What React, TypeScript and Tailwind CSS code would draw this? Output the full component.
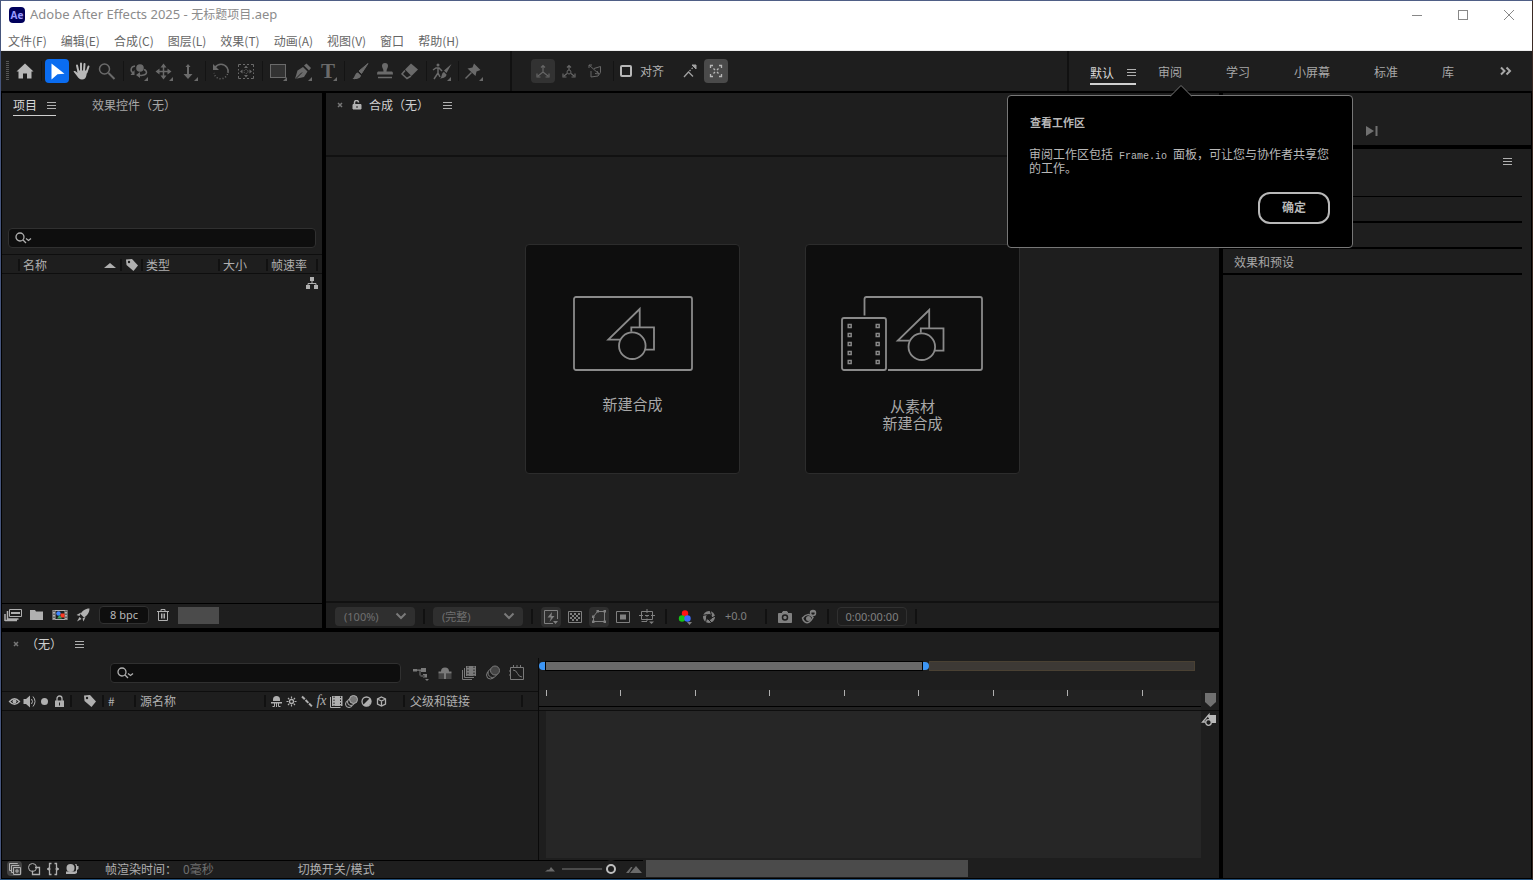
import { useState } from "react";
import type { ReactNode } from "react";

const MENUS = ["文件(F)", "编辑(E)", "合成(C)", "图层(L)", "效果(T)", "动画(A)", "视图(V)", "窗口", "帮助(H)"];
const WORKSPACES = ["学习", "小屏幕", "标准", "库"];

function Icon({ size = 20, className = "", children }: { size?: number; className?: string; children: ReactNode }) {
  return (
    <svg
      width={size}
      height={size}
      viewBox={`0 0 ${size} ${size}`}
      fill="none"
      stroke="currentColor"
      className={`shrink-0 ${className}`}
      aria-hidden="true"
    >
      {children}
    </svg>
  );
}

const corner = <path d="M19 16v4h-4z" fill="currentColor" stroke="none" />;

const TOOLS: { label: string; icon: ReactNode; bright?: boolean; active?: boolean; sep?: boolean }[] = [
  {
    label: "主页",
    bright: true,
    sep: true,
    icon: <path d="M10 2.500 18.500 10.500H16.500V17.500H12V12.500H8V17.500H3.500V10.500H1.500Z" fill="currentColor" stroke="none" />,
  },
  {
    label: "选取工具",
    active: true,
    icon: <path d="M4.500 2.500 17.500 12.800 10.500 13.200 4.500 18.500Z" fill="currentColor" stroke="none" />,
  },
  {
    label: "手形工具",
    bright: true,
    icon: (
      <>
        <path d="M6.500 11 5 4.500M9 10V2.500M12 10 12.500 3M14.500 11.500 16.500 5.500" strokeWidth="2" strokeLinecap="round" />
        <path d="M5.500 9.500H15L14.500 14C14 17 12.500 18.500 10 18.500 7.500 18.500 6.500 17 5 15L1.500 10.500C2.500 9.500 3.500 10 5.500 12Z" fill="currentColor" stroke="none" />
      </>
    ),
  },
  {
    label: "缩放工具",
    sep: true,
    icon: (
      <>
        <circle cx="7.500" cy="8" r="5" strokeWidth="1.500" />
        <path d="m11.500 12 6 6" strokeWidth="2" />
      </>
    ),
  },
  {
    label: "绕光标旋转",
    icon: (
      <>
        <path d="M6 5C1.500 5.500 1 10 4 12M9 14C13 15 17.500 14 17.500 11.500 17.500 10 16.500 9 15 8.500" strokeWidth="1.500" />
        <circle cx="11" cy="7" r="3.800" fill="currentColor" stroke="none" />
        <path d="M5.500 9v5h-4zM11 11v6l-4-3z" fill="currentColor" stroke="none" />
        {corner}
      </>
    ),
  },
  {
    label: "在光标下移动",
    icon: (
      <>
        <path d="M9.500 4v13M3 10.500h13" strokeWidth="1.500" />
        <path d="m9.500 2.500 3 4h-6zM9.500 18.500l3-4h-6zM1.500 10.500l4-3v6zM17.500 10.500l-4-3v6z" fill="currentColor" stroke="none" />
        {corner}
      </>
    ),
  },
  {
    label: "向光标方向推拉镜头",
    sep: true,
    icon: (
      <>
        <path d="M9 5v10" strokeWidth="2" />
        <path d="m9 3 2.500 3h-5zM9 18l4.500-5h-9z" fill="currentColor" stroke="none" />
        {corner}
      </>
    ),
  },
  {
    label: "旋转工具",
    icon: (
      <>
        <path d="M4 6.500C7 2 13 2 16 6.500 17 8 17.500 10 17 12" strokeWidth="1.500" />
        <path d="M16.500 13C15 17 11 18.500 7.500 17.500 5 16.500 3.500 14.500 3 12" strokeWidth="1.500" strokeDasharray="1 2" />
        <path d="M2 3v6h6z" fill="currentColor" stroke="none" />
      </>
    ),
  },
  {
    label: "向后平移工具",
    sep: true,
    icon: (
      <>
        <path d="M2.500 6V3.500H5M15 3.500h2.500V6M17.500 15v2.500H15M5 17.500H2.500V15M7 3.500h2M11 3.500h2M7 17.500h2M11 17.500h2M2.500 8v1.500M2.500 11.500V13M17.500 8v1.500M17.500 11.500V13" />
        <circle cx="10" cy="10.500" r="2" strokeWidth="1" strokeDasharray="1 1" />
        <path d="m10 4.500 2 2.500H8zM10 16.500l2-2.500H8zM4 10.500l2.500-2v4zM16 10.500l-2.500-2v4z" fill="currentColor" stroke="none" />
      </>
    ),
  },
  {
    label: "矩形工具",
    icon: (
      <>
        <rect x="2.500" y="3.500" width="15" height="13" fill="#333333" />
        {corner}
      </>
    ),
  },
  {
    label: "钢笔工具",
    icon: (
      <>
        <path d="M2 18 4.500 9.500 10 6 14.500 10.500 11 16Z" fill="currentColor" stroke="none" />
        <path d="m2.500 18 6.500-6.500" stroke="#1e1e1e" />
        <path d="m11 4.500 2.500-2L18 7l-2 2.500z" fill="currentColor" stroke="none" />
        {corner}
      </>
    ),
  },
  { label: "横排文字工具", sep: true, icon: corner },
  {
    label: "画笔工具",
    icon: (
      <>
        <path d="M18 2.500 9 10l2.500 2.500z" fill="currentColor" strokeLinejoin="round" />
        <path d="M8 11.500 11 14.500C10.500 18 5 18.500 2.500 18 5 16.500 4.500 12 8 11.500Z" fill="currentColor" stroke="none" />
      </>
    ),
  },
  {
    label: "仿制图章工具",
    icon: (
      <>
        <path d="M7 5a3 3 0 1 1 6 0c0 2-1.500 2.500-1.500 5.500H17q1 0 1 3H2q0-3 1-3h5.500C8.500 7.500 7 7 7 5Z" fill="currentColor" stroke="none" />
        <path d="M3 16.500h14" strokeWidth="1.500" />
      </>
    ),
  },
  {
    label: "橡皮擦工具",
    sep: true,
    icon: (
      <>
        <path d="M11 2.500 18 8.500 11.500 15 5 8.500Z" fill="currentColor" stroke="none" />
        <path d="M5 9.500 2 13 7 17.500 11 15" strokeWidth="1.500" />
      </>
    ),
  },
  {
    label: "Roto 笔刷工具",
    sep: true,
    icon: (
      <>
        <circle cx="6" cy="4" r="1.500" fill="currentColor" stroke="none" />
        <path d="M1 9 4 7H7l3 3M6 7v5l-4 6M6 12l2 4" strokeWidth="1.500" />
        <path d="M19.500 3 12 9.500l2.500 2.500zM12 11l2.500 2.500c0 3-4.500 4-6.500 4 2-1 1.500-6 4-6.500Z" fill="currentColor" stroke="none" />
        {corner}
      </>
    ),
  },
  {
    label: "人偶位置控点工具",
    icon: (
      <>
        <path d="M10 2.500 16.500 9 12.500 10.500 11.500 15 3.500 7.500 8.500 6.500Z" fill="currentColor" stroke="none" />
        <path d="m7.500 11.500-6 6" strokeWidth="1.500" />
        {corner}
      </>
    ),
  },
];

function Burger({ className = "" }: { className?: string }) {
  return (
    <button aria-label="面板菜单" className={`text-[#b0b0b0] ${className}`}>
      <Icon size={9}>
        <path d="M0 1.500h9M0 4.500h9M0 7.500h9" />
      </Icon>
    </button>
  );
}

function TabClose() {
  return (
    <button aria-label="关闭" className="text-[#777777]">
      <Icon size={6}>
        <path d="m1 1 4 4M5 1 1 5" strokeWidth="1.500" />
      </Icon>
    </button>
  );
}

function SearchBox({ label, className = "" }: { label: string; className?: string }) {
  return (
    <label className={`relative flex h-5 items-center rounded border border-[#303030] bg-[#0e0e0e] ${className}`}>
      <Icon size={18} className="ml-1.5 text-[#b0b0b0]">
        <circle cx="5" cy="8" r="4" strokeWidth="1.300" />
        <path d="m8 11 3 3M11 9.500l2.500 2 2.500-2" strokeWidth="1.300" />
      </Icon>
      <input type="text" aria-label={label} className="min-w-0 flex-1 bg-transparent px-1 text-xs text-[#cccccc] outline-none" />
    </label>
  );
}

function Tag() {
  return (
    <Icon size={14}>
      <path d="M1 1.500 7 1 13 7.500 8.500 13 1.500 7Z" fill="currentColor" stroke="none" />
      <circle cx="4" cy="4" r="1.200" fill="#1e1e1e" stroke="none" />
    </Icon>
  );
}

function Shapes() {
  return (
    <>
      <path d="M47 43.700H35.300L66.700 13V31.300M58.300 35.700V31.300H81V53.700H72.300" />
      <circle cx="59.300" cy="49.700" r="13.300" />
    </>
  );
}

function TitleBar() {
  return (
    <header className="bg-white">
      <div className="flex h-7 items-center pl-2">
        <span className="flex size-4 items-center justify-center rounded-sm bg-[#00005b] font-['Open_Sans',sans-serif] text-[10px] font-bold text-[#9999ff]">
          Ae
        </span>
        <h1 className="ml-[5px] flex-1 font-['Noto_Sans','Noto_Sans_CJK_SC',sans-serif] text-[13px] text-[#8c8c8c]">
          Adobe After Effects 2025 - <span className="text-xs">无标题项目</span>.aep
        </h1>
        <div className="flex gap-[34px] pr-[17px] text-[#888888]">
          <button aria-label="最小化">
            <Icon size={12}>
              <path d="M1 6.500h10" />
            </Icon>
          </button>
          <button aria-label="最大化">
            <Icon size={12}>
              <rect x="1.500" y="1.500" width="9" height="9" />
            </Icon>
          </button>
          <button aria-label="关闭窗口">
            <Icon size={12}>
              <path d="m1 1 10 10M11 1 1 11" />
            </Icon>
          </button>
        </div>
      </div>
      <nav className="flex h-[22px] items-center gap-[14px] border-b border-[#eeeeee] pt-[2px] pl-[7px] text-xs text-[#666666]">
        {MENUS.map((m) => (
          <button key={m}>{m}</button>
        ))}
      </nav>
    </header>
  );
}

function Toolbar({ showTip, onClose }: { showTip: boolean; onClose: () => void }) {
  return (
    <div className="relative flex h-[42px] items-stretch border-b-2 border-black bg-[#1e1e1e]">
      <div className="flex items-center pl-1">
        <Icon size={20} className="-mr-3 text-[#555555]">
          <path d="M2.500 0v20" strokeWidth="3" strokeDasharray="1 1" />
        </Icon>
        {TOOLS.map((t) => (
          <div key={t.label} className="flex items-center">
            <button
              aria-label={t.label}
              className={`relative mr-px flex size-6 items-center justify-center rounded ${
                t.active ? "bg-[#0a6cf0] text-white" : t.bright ? "text-[#b8b8b8]" : "text-[#6a6a6a]"
              }`}
            >
              <Icon>{t.icon}</Icon>
              {t.label === "横排文字工具" && (
                <span className="absolute inset-0 text-center font-['Liberation_Serif',serif] text-[21px] leading-6 font-bold">T</span>
              )}
            </button>
            {t.sep && <span className="mx-[3px] h-5 w-px bg-[#141414]" />}
          </div>
        ))}
      </div>
      <div className="ml-[23px] flex items-center border-l-2 border-[#111111] pl-[19px] text-[#666666]">
        <button aria-label="本地轴模式" className="flex size-6 items-center justify-center rounded bg-[#323232]">
          <Icon size={16}>
            <path d="M8 3v6L3 13M8 9l5 4M6 4.500 8 2.500l2 2M2 10.500V14h3.500M14 10.500V14h-3.500" strokeWidth="1.200" />
          </Icon>
        </button>
        <button aria-label="世界轴模式" className="ml-[2px] flex size-6 items-center justify-center">
          <Icon size={16}>
            <path d="M8 3v4M6 10.500 3 13M10 10.500l3 2.500M6 4.500 8 2.500l2 2M2 10.500V14h3.500M14 10.500V14h-3.500" strokeWidth="1.200" />
            <circle cx="8" cy="9" r="2" />
          </Icon>
        </button>
        <button aria-label="视图轴模式" className="ml-[2px] flex size-6 items-center justify-center">
          <Icon size={16}>
            <path d="M7 5.500 13.500 3.500v6L11 13 4 14V8M2 2l10 9M2 5V2h3M10 8l2 3-4-.5" />
          </Icon>
        </button>
        <span className="mx-[6px] h-5 w-px bg-[#141414]" />
        <input
          id="snap"
          type="checkbox"
          className="size-3 appearance-none rounded-xs border-2 border-[#b8b8b8] checked:bg-[#b8b8b8]"
        />
        <label htmlFor="snap" className="ml-2 text-xs text-[#b0b0b0]">
          对齐
        </label>
        <button aria-label="对齐边缘" className="ml-[14px] flex size-6 items-center justify-center text-[#a0a0a0]">
          <Icon size={16}>
            <path d="M2 14 6.500 9l4.500 4.500" strokeWidth="1.300" />
            <path d="m7.500 8 4-4" strokeWidth="1.300" strokeDasharray="1.500 1.500" />
            <path d="M10 2h4v4z" fill="currentColor" />
          </Icon>
        </button>
        <button aria-label="对齐特征" className="ml-[2px] flex size-6 items-center justify-center rounded bg-[#4a4a4a] text-[#b8b8b8]">
          <Icon size={16}>
            <path d="M2.500 5V2.500H5M11 2.500h2.500V5M13.500 11v2.500H11M5 13.500H2.500V11M5.500 5.500l1.500 1.500M10.500 5.500 9 7M5.500 10.500 7 9M10.500 10.500 9 9" strokeWidth="1.300" />
          </Icon>
        </button>
      </div>
      <nav className="ml-auto flex items-center border-l-2 border-[#111111] pl-[21px] text-xs text-[#a8a8a8]">
        <div className="mt-[6px] flex items-center gap-[13px] border-b-2 border-[#d0d0d0] pb-px">
          <button className="leading-[18px] text-[#d8d8d8]">默认</button>
          <Burger />
        </div>
        <button className="mt-[2px] ml-[22px]">审阅</button>
        <div className="mt-[2px] ml-11 flex gap-11">
          {WORKSPACES.map((w) => (
            <button key={w}>{w}</button>
          ))}
        </div>
        <button aria-label="更多工作区" className="mr-5 ml-[46px]">
          <Icon size={12}>
            <path d="m1 2.500 3.500 3.500L1 9.500M6.500 2.500 10 6 6.500 9.500" strokeWidth="2" />
          </Icon>
        </button>
      </nav>
      {showTip && (
        <section className="absolute top-11 right-[179px] z-10 w-[346px] rounded border border-[#777777] bg-black pt-5 pr-[22px] pb-[23px] pl-[21px] font-['Liberation_Sans','Noto_Sans_CJK_SC',sans-serif] text-[#b8b8b8]">
          <svg width="22" height="12" viewBox="0 0 22 12" className="absolute -top-[11px] left-[162px]" aria-hidden="true">
            <path d="M0 11.500 11 .5 22 11.500" fill="#000000" stroke="#777777" />
            <path d="M1.500 11.500h19" stroke="#000000" />
          </svg>
          <h2 className="pl-px text-[11px] leading-[14px] font-bold">查看工作区</h2>
          <p className="mt-[18px] text-xs leading-[14px]">
            审阅工作区包括<span className="font-['Liberation_Mono',monospace] text-[10px] leading-none"> Frame.io </span>面板，可让您与协作者共享您的工作。
          </p>
          <div className="mt-4 flex justify-end">
            <button onClick={onClose} className="h-8 w-[72px] rounded-xl border-2 border-[#b8b8b8] text-xs font-bold">
              确定
            </button>
          </div>
        </section>
      )}
    </div>
  );
}

function ProjectPanel() {
  return (
    <section className="flex w-80 shrink-0 flex-col bg-[#1e1e1e]">
      <div className="flex h-[135px] items-start pl-[11px] text-xs leading-[18px]">
        <div className="mt-[3px] flex items-center gap-[10px] border-b border-[#d0d0d0] pb-px">
          <button className="text-[#d8d8d8]">项目</button>
          <Burger />
        </div>
        <button className="mt-[3px] ml-9 text-[#a8a8a8]">效果控件（无）</button>
      </div>
      <SearchBox label="搜索项目" className="mr-[6px] ml-[6px]" />
      <div className="mt-[6px] flex h-5 items-center border-y border-[#0e0e0e] pt-[2px] pl-4 text-xs leading-3 text-[#b0b0b0]">
        <div className="flex w-[102px] items-center justify-between border-l-2 border-[#111111] pr-1 pl-[3px]">
          <span>名称</span>
          <Icon size={12}>
            <path d="M0 9 6 4l6 5z" fill="currentColor" stroke="none" />
          </Icon>
        </div>
        <div className="flex h-3 w-[21px] items-center justify-center border-l-2 border-[#111111]">
          <Tag />
        </div>
        <span className="w-[77px] border-l-2 border-[#111111] pl-[3px]">类型</span>
        <span className="w-12 border-l-2 border-[#111111] pl-[3px]">大小</span>
        <span className="w-[50px] border-l-2 border-[#111111] pl-[3px]">帧速率</span>
        <span className="h-3 border-l-2 border-[#111111]" />
      </div>
      <div className="flex flex-1 items-start justify-end pt-[2px] pr-[3px] text-[#b0b0b0]">
        <Icon size={14}>
          <path d="M5 1h4v4H5zM1 9h4v4H1zM9 9h4v4H9z" fill="currentColor" stroke="none" />
          <path d="M7 5v2.500M3 9V7.500h8V9" />
        </Icon>
      </div>
      <div className="flex h-[25px] items-center border-t border-black pb-[2px] pl-[2px] text-[#b0b0b0]">
        <button aria-label="解释素材">
          <Icon size={18}>
            <path d="M5.500 3.500h12v7h-12z" />
            <path d="M7 6h9v2H7z" fill="currentColor" stroke="none" />
            <path d="M3.500 5v8h11M1 8v7M1 14.500h12" strokeWidth="1.500" />
          </Icon>
        </button>
        <button aria-label="新建文件夹" className="ml-[7px]">
          <Icon size={16}>
            <path d="M1 3h5l1 1.500h7V13H1z" fill="currentColor" stroke="none" />
          </Icon>
        </button>
        <button aria-label="新建合成" className="ml-[7px]">
          <Icon size={16}>
            <path d="M.5 3h15v10H.5z" fill="currentColor" stroke="none" />
            <path d="M3.500 4h9v8h-9z" fill="#1e1e1e" stroke="none" />
            <path d="M2 3.500v10M14 3.500v10" stroke="#1e1e1e" strokeDasharray="1.500 1.500" />
            <circle cx="6.500" cy="6.500" r="2.200" fill="#3f86ff" stroke="none" />
            <path d="M8.500 6.500h4v4h-4z" fill="#ff3b24" stroke="none" />
            <path d="m7.500 8 2.500 3.500H5z" fill="#36a060" stroke="none" />
          </Icon>
        </button>
        <button aria-label="项目设置" className="ml-[7px]">
          <Icon size={16}>
            <path d="M14.500 1.500C10 1.500 7 4 5.500 7L9 10.500C12 8.500 14.500 6 14.500 1.500ZM6 5.500 1.500 8l3 1zM10.500 10 8.500 14.500 7.500 11.500zM4.500 10l2 2L2 14.500z" fill="currentColor" stroke="none" />
          </Icon>
        </button>
        <button className="ml-2 h-[18px] w-[50px] rounded border border-[#303030] bg-[#0e0e0e] font-['Noto_Sans',sans-serif] text-[11px] leading-4 text-[#b8b8b8]">
          8 bpc
        </button>
        <button aria-label="删除" className="ml-[7px]">
          <Icon size={14}>
            <path d="M1 3.500h12M5 3V1.500h4V3M2.500 4v8.500h9V4M5.500 5.500v5M7 5.500v5M8.500 5.500v5" />
          </Icon>
        </button>
        <div className="ml-2 h-[17px] w-[41px] bg-[#4b4b4b]" />
      </div>
    </section>
  );
}

function FooterSep() {
  return <span className="mx-2 h-[15px] w-[2px] bg-[#111111]" />;
}

function FooterSelect({ label, value, className }: { label: string; value: string; className: string }) {
  return (
    <div className={`relative flex ${className}`}>
      <select
        aria-label={label}
        defaultValue={value}
        className="h-[19px] w-full appearance-none rounded bg-[#2f2f2f] pl-[9px] font-['Noto_Sans','Noto_Sans_CJK_SC',sans-serif] text-[11px] leading-[19px] text-[#6f6f6f]"
      >
        <option>{value}</option>
      </select>
      <Icon size={12} className="pointer-events-none absolute top-[3px] right-2 text-[#7a7a7a]">
        <path d="m1.500 3.500 4.500 4.500 4.500-4.500" strokeWidth="2" />
      </Icon>
    </div>
  );
}

function FooterButton({ label, on, children }: { label: string; on?: boolean; children: ReactNode }) {
  return (
    <button aria-label={label} className={`flex size-5 items-center justify-center rounded ${on ? "bg-[#2f2f2f]" : ""}`}>
      <Icon size={16}>{children}</Icon>
    </button>
  );
}

function CompositionPanel() {
  return (
    <section className="flex min-w-0 flex-1 flex-col bg-[#1e1e1e]">
      <div className="flex h-16 items-start border-b-2 border-[#111111] pt-[3px] pl-[11px] text-xs text-[#d0d0d0]">
        <div className="flex h-[18px] items-center">
          <TabClose />
          <Icon size={10} className="ml-[9px] text-[#b0b0b0]">
            <path d="M1 4.500h8V9H1z" fill="currentColor" />
            <path d="M2.500 4.500V2.500a2 2 0 0 1 4 0" strokeWidth="1.500" />
            <path d="M5 6v2" stroke="#1e1e1e" />
          </Icon>
          <button className="ml-[7px]">合成（无）</button>
          <Burger className="ml-[14px]" />
        </div>
      </div>
      <div className="flex flex-1 items-center justify-center gap-[65px] pb-10 font-['Liberation_Sans','Noto_Sans_CJK_SC',sans-serif] text-[15px] leading-[17px] text-[#a8a8a8]">
        <button className="flex h-[230px] w-[215px] flex-col items-center rounded border border-[#2c2c2c] bg-[#0e0e0e] pt-[51px]">
          <svg width="120" height="76" viewBox="0 0 120 76" fill="none" stroke="#8a8a8a" strokeWidth="1.800" aria-hidden="true">
            <rect x="1" y="1" width="118" height="73" rx="2" />
            <Shapes />
          </svg>
          <span className="mt-6">新建合成</span>
        </button>
        <button className="flex h-[230px] w-[215px] flex-col items-center rounded border border-[#2c2c2c] bg-[#0e0e0e] pt-[51px]">
          <svg width="143" height="76" viewBox="0 0 143 76" fill="none" stroke="#8a8a8a" strokeWidth="1.800" aria-hidden="true">
            <path d="M23.500 19.500V3q0-2 2-2H139q2 0 2 2V72q0 2-2 2H47" />
            <rect x="1" y="22" width="44" height="52" rx="2" />
            {[30, 39, 48, 57, 66].map((y) => (
              <path key={y} d={`M7.200 ${y - 1.5}h3v3h-3zM35.200 ${y - 1.5}h3v3h-3z`} strokeWidth="1.400" />
            ))}
            <g transform="translate(21.500 1)">
              <Shapes />
            </g>
          </svg>
          <span className="mt-[26px]">
            从素材
            <br />
            新建合成
          </span>
        </button>
      </div>
      <div className="flex h-[27px] items-center border-t-2 border-[#111111] pt-[2px] pl-[9px] text-[#808080]">
        <FooterSelect label="放大率" value="(100%)" className="w-20" />
        <FooterSep />
        <FooterSelect label="分辨率" value="(完整)" className="w-[90px]" />
        <FooterSep />
        <div className="flex gap-1">
          <FooterButton label="快速预览" on>
            <path d="M10 14.500H1.500v-13h13V10" />
            <path d="M9 3 4.500 8.500H8L6.500 13 11.500 7H8.500zM10 12h5l-2.500 3z" fill="currentColor" stroke="none" />
          </FooterButton>
          <FooterButton label="透明网格">
            <path d="M1.500 2.500h13v11h-13z" />
            <path d="M3 4h2v2H3zM7 4h2v2H7zM11 4h2v2h-2zM5 6h2v2H5zM9 6h2v2H9zM3 8h2v2H3zM7 8h2v2H7zM11 8h2v2h-2zM5 10h2v2H5zM9 10h2v2H9z" fill="currentColor" stroke="none" />
          </FooterButton>
          <FooterButton label="切换蒙版" on>
            <path d="M2.500 12.500V7.500L6.500 2.500h7v10z" />
            <path d="M1 11.500h2.500V14H1zM12.500 11.500H15V14h-2.500zM12.500 1H15v2.500h-2.500zM1 6.500h2.500V9H1zM5.500 1H8v2.500H5.500z" fill="currentColor" stroke="none" />
          </FooterButton>
          <FooterButton label="目标区域">
            <path d="M1.500 2.500h13v11h-13z" />
            <path d="M5 5.500h6v5H5z" fill="currentColor" stroke="none" />
          </FooterButton>
          <FooterButton label="网格和参考线">
            <path d="M2.500 2.500h11v8h-11zM8 0v4M8 6v2M8 9.500V12M0 6.500h4M6 6.500h4M12 6.500h4M2.500 12.500H8" />
            <path d="M10 12.500h5L12.500 15z" fill="currentColor" stroke="none" />
          </FooterButton>
        </div>
        <FooterSep />
        <div className="flex items-center gap-1">
          <FooterButton label="通道">
            <circle cx="8" cy="4.500" r="3.200" fill="#ff1414" stroke="none" />
            <circle cx="5" cy="9.500" r="3.200" fill="#17c117" stroke="none" />
            <circle cx="10.500" cy="9.500" r="3.200" fill="#3b6cff" stroke="none" />
            <path d="M10 13h5l-2.500 3z" fill="currentColor" stroke="none" />
          </FooterButton>
          <FooterButton label="重置曝光度">
            <circle cx="8" cy="8" r="4.500" strokeWidth="3" />
            <path d="m9 1 1.500 5M14.500 7 9.500 9.500M11 14 7 10M4.500 13.500 6 8M1.500 6.500 6.500 5.500" stroke="#1e1e1e" />
          </FooterButton>
          <button className="w-[34px] pl-[2px] text-left font-['Noto_Sans',sans-serif] text-[11px]">+0.0</button>
        </div>
        <FooterSep />
        <div className="flex gap-1">
          <FooterButton label="拍摄快照">
            <path d="M1.500 4.500H5L6 2.500h4l1 2h3.500v9h-13z" fill="currentColor" />
            <circle cx="8" cy="8.500" r="2.500" fill="currentColor" stroke="#1e1e1e" strokeWidth="1.500" />
          </FooterButton>
          <FooterButton label="显示快照">
            <path d="M1.500 9Q7 2.500 12 8.500 8 15.500 4 13 2 11.500 1.500 9Z" strokeWidth="1.500" />
            <circle cx="7.500" cy="9.500" r="2.500" fill="currentColor" stroke="none" />
            <circle cx="12" cy="4" r="2.500" strokeWidth="1.500" />
            <path d="M9 2h5.500v1.500H9z" fill="currentColor" stroke="none" />
          </FooterButton>
        </div>
        <FooterSep />
        <button className="h-[19px] w-[70px] rounded border border-[#303030] font-['Noto_Sans',sans-serif] text-[11px] leading-[17px]">
          0:00:00:00
        </button>
        <FooterSep />
      </div>
    </section>
  );
}

function TimelineHeader() {
  return (
    <div className="flex h-5 items-center border-y border-[#0e0e0e] pl-[5px] text-xs leading-3 text-[#b0b0b0]">
      <Icon size={15}>
        <path d="M2.500 7.500Q7.500 2 12.500 7.500 7.500 13 2.500 7.500Z" strokeWidth="1.300" />
        <circle cx="7.500" cy="7.500" r="2" fill="currentColor" stroke="none" />
      </Icon>
      <Icon size={15}>
        <path d="M1.500 5H4l4-3.500v12L4 10H1.500z" fill="currentColor" stroke="none" />
        <path d="M9.500 5q2 2.500 0 5M11 2.500q4 5 0 10" />
      </Icon>
      <Icon size={15}>
        <circle cx="7.500" cy="7.500" r="3.500" fill="currentColor" stroke="none" />
      </Icon>
      <Icon size={15}>
        <path d="M3 6.500h9V13H3z" fill="currentColor" stroke="none" />
        <path d="M5 7V4.500a2.500 2.500 0 0 1 5 0V7" strokeWidth="1.300" />
        <path d="M7.500 8.500v3" stroke="#1e1e1e" />
      </Icon>
      <div className="ml-[3px] flex h-3 w-8 items-center border-l-2 border-[#111111] pl-[11px]">
        <Tag />
      </div>
      <span className="w-8 border-l-2 border-[#111111] pl-1">#</span>
      <span className="w-[130px] border-l-2 border-[#111111] pl-1">源名称</span>
      <div className="flex h-3 w-[139px] items-center border-l-2 border-[#111111] pl-[3px]">
        <Icon size={15}>
          <path d="M4 7V5.500a3.500 3.500 0 0 1 7 0V7zM2 8h11v1.500H2zM7 9.500h1V13H7z" fill="currentColor" stroke="none" />
          <path d="M3.500 12.500h2V9M11.500 12.500h-2V9" />
        </Icon>
        <Icon size={15}>
          <circle cx="7.500" cy="7.500" r="2" strokeWidth="1.300" />
          <path d="M7.500 2.500v2M7.500 10.500v2M2.500 7.500h2M10.500 7.500h2M4 4l1.300 1.300M9.700 9.700 11 11M11 4 9.700 5.300M4 11l1.300-1.300" strokeWidth="1.200" />
        </Icon>
        <Icon size={15}>
          <path d="m3 2.500 10 10" strokeWidth="2" strokeDasharray="4 1" />
        </Icon>
        <span className="w-[15px] text-center font-['Liberation_Serif',serif] text-sm leading-3 italic">fx</span>
        <Icon size={15}>
          <path d="M3 2h10.500v10H3z" fill="currentColor" stroke="none" />
          <path d="M1.500 3v10.500h10" />
          <path d="M5 2.500v10M11.500 2.500v10" stroke="#1e1e1e" strokeDasharray="1.500 1.500" />
        </Icon>
        <Icon size={15}>
          <circle cx="5" cy="10" r="3.500" />
          <circle cx="7" cy="8" r="3.500" fill="#1e1e1e" />
          <circle cx="9.500" cy="5.500" r="4" fill="#777777" />
        </Icon>
        <Icon size={15}>
          <circle cx="7.500" cy="7.500" r="4.500" strokeWidth="1.300" />
          <path d="M11 4 4 11a5 5 0 0 0 7-7Z" fill="currentColor" stroke="none" />
        </Icon>
        <Icon size={15}>
          <path d="m7.500 3 4 2v5l-4 2-4-2V5zM3.500 5l4 2 4-2M7.500 7v5" strokeWidth="1.300" />
        </Icon>
      </div>
      <span className="w-[118px] border-l-2 border-[#111111] pl-[5px]">父级和链接</span>
      <span className="h-3 border-l-2 border-[#111111]" />
    </div>
  );
}

function TimelineRuler() {
  return (
    <div className="flex min-w-0 flex-1 flex-col">
      <div className="mt-[3px] flex h-[10px]">
        <span className="my-px w-[6px] rounded-l-full bg-[#3d96f5]" />
        <div className="w-[378px] border border-black bg-[#696969]" />
        <span className="my-px w-[6px] rounded-r-full bg-[#3d96f5]" />
        <div className="mr-6 flex-1 border border-[#4a4133] bg-[#3d3935]" />
      </div>
      <div className="mt-[19px] flex h-[21px]">
        <div className="min-w-0 flex-1 border-b border-[#0e0e0e] bg-[#222222] pl-[7px]">
          <div className="-mr-[15px] grid h-4 grid-cols-9">
            {Array.from({ length: 9 }, (_, i) => (
              <span key={i} className="h-[6px] border-l border-[#b0b0b0]" />
            ))}
          </div>
          <div className="-ml-[7px] h-px bg-black" />
        </div>
        <div className="flex w-[18px] justify-center border-b border-[#0e0e0e] pt-[2px] text-[#707070]">
          <Icon size={16}>
            <path d="M3 1h11v9l-5.500 5L3 10z" fill="currentColor" stroke="none" />
          </Icon>
        </div>
      </div>
      <div className="flex flex-1">
        <div className="mb-[2px] ml-[7px] flex-1 bg-[#262626]" />
        <div className="w-[18px] pt-px text-[#b8b8b8]">
          <Icon size={16}>
            <path d="M7 3h8v8H9z" fill="currentColor" stroke="none" />
            <path d="M4 10H1.500L8 2.500V6" strokeWidth="1.300" />
            <circle cx="7.500" cy="10.500" r="2.800" fill="#1e1e1e" strokeWidth="1.300" />
          </Icon>
        </div>
      </div>
    </div>
  );
}

function TimelinePanel() {
  return (
    <section className="flex h-[246px] shrink-0 flex-col bg-[#1e1e1e]">
      <div className="flex h-[26px] items-center pb-[2px] pl-[11px] text-xs text-[#d0d0d0]">
        <TabClose />
        <button className="ml-[7px]">（无）</button>
        <Burger className="ml-[13px]" />
      </div>
      <div className="flex flex-1">
        <div className="flex w-[537px] flex-col border-r border-[#0a0a0a]">
          <div className="flex h-[33px] items-center gap-2 pb-[3px] pl-[108px] text-[#7a7a7a]">
            <SearchBox label="搜索图层" className="mr-1 w-[291px]" />
            <button aria-label="合成微型流程图">
              <Icon size={16}>
                <path d="M0 4h4v2.500H0zM8 3h5v4H8zM10 9h4v3.500h-4zM12 14h4l-2 2zM3 4.500h6v1.200H3zM6.500 5h1v6.500h4v-1H6.500z" fill="currentColor" stroke="none" />
              </Icon>
            </button>
            <button aria-label="隐藏消隐图层">
              <Icon size={16}>
                <path d="M1.500 8.500h13V14h-13z" fill="#444444" stroke="none" />
                <path d="M4 6.500a4 4 0 0 1 8 0zM1.500 6.500h13v2h-13zM7 8h2v6H7z" fill="currentColor" stroke="none" />
              </Icon>
            </button>
            <button aria-label="帧混合">
              <Icon size={16}>
                <path d="M5 1h10v10H5z" fill="currentColor" stroke="none" />
                <path d="M3.500 3v9.500H13M1.500 5v9.500H11" />
                <path d="M7 1.500v10M13 1.500v10" stroke="#1e1e1e" strokeDasharray="1.500 1.500" />
              </Icon>
            </button>
            <button aria-label="运动模糊">
              <Icon size={16}>
                <circle cx="5.500" cy="10" r="4" />
                <circle cx="7.500" cy="8" r="4.500" fill="#1e1e1e" />
                <circle cx="10" cy="5.500" r="4.500" fill="#444444" />
              </Icon>
            </button>
            <button aria-label="图表编辑器">
              <Icon size={16}>
                <path d="M1.500 2.500h13v12h-13zM4 5q3 0 4.500 3.500T13 12M4.500 0v2M8 0v2M11.500 0v2M0 6h1.500M0 10h1.500" />
              </Icon>
            </button>
          </div>
          <TimelineHeader />
        </div>
        <TimelineRuler />
      </div>
      <div className="flex h-[18px] items-center text-xs leading-4 text-[#b0b0b0]">
        <div className="flex h-full w-[536px] items-center border-t border-black pb-[2px] pl-[5px]">
          <button aria-label="图层开关" className="flex size-[15px] items-center justify-center rounded bg-[#444444]">
            <Icon size={14}>
              <path d="M9.500 2V1.500h-8v7H3M11 4V3.500H3.500v7H5" />
              <path d="M5.500 5.500h7v7h-7zM9 7v4M7 9h4" />
            </Icon>
          </button>
          <button aria-label="转换控制" className="ml-[5px]">
            <Icon size={14}>
              <circle cx="5.500" cy="5.500" r="4" />
              <path d="M8 5.500h4.500v7h-7V8.500" strokeWidth="1.300" />
            </Icon>
          </button>
          <button aria-label="入点出点" className="ml-[5px]">
            <Icon size={14}>
              <path d="M5.500 1.500h-2v4L2 7l1.500 1.500v4h2M8.500 1.500h2v4L12 7l-1.500 1.500v4h-2M1 7h3.500M9.500 7H13" strokeWidth="1.300" />
            </Icon>
          </button>
          <button aria-label="渲染时间" className="ml-[5px]">
            <Icon size={14}>
              <circle cx="5.500" cy="6" r="4" fill="currentColor" stroke="none" />
              <path d="M1 9.500h9q1 0 1-2V4l-1-2h1.500l.5 2h1.500v3l-1.500 1v3l-2 1H1z" fill="currentColor" stroke="none" />
            </Icon>
          </button>
          <span className="ml-[26px]">帧渲染时间：</span>
          <span className="ml-[6px] text-[#6f6f6f]">0毫秒</span>
          <button className="ml-[84px]">切换开关/模式</button>
        </div>
        <div className="flex h-full items-center border-t border-black pb-[2px] pl-[6px] text-[#6a6a6a]">
          <Icon size={12}>
            <path d="M1 8.500 4 6.500l1 .5 2-3 4 4.500z" fill="currentColor" stroke="none" />
          </Icon>
          <input
            type="range"
            aria-label="时间轴缩放"
            defaultValue={91}
            className="ml-[6px] h-3 w-[58px] appearance-none bg-[linear-gradient(#4b4b4b,#4b4b4b)] bg-[length:100%_2px] bg-center bg-no-repeat [&::-webkit-slider-thumb]:size-[10px] [&::-webkit-slider-thumb]:appearance-none [&::-webkit-slider-thumb]:rounded-full [&::-webkit-slider-thumb]:border-2 [&::-webkit-slider-thumb]:border-[#c0c0c0] [&::-webkit-slider-thumb]:bg-[#1e1e1e] [&::-webkit-slider-thumb]:shadow-[0_0_0_4px_#1e1e1e]"
          />
          <Icon size={18} className="ml-[5px]">
            <path d="M1 13 6 7h1.500L4 13zM5 13l6-7 6 7z" fill="currentColor" stroke="none" />
          </Icon>
        </div>
        <div className="ml-[3px] h-[17px] w-[322px] self-start bg-[#4b4b4b]" />
      </div>
    </section>
  );
}

function SidePanels() {
  return (
    <aside className="flex w-[308px] shrink-0 flex-col gap-1 bg-black">
      <section className="flex h-[52px] items-center justify-center gap-[13px] bg-[#1e1e1e] pt-[23px] pr-9 text-[#707070]">
        <button aria-label="下一帧">
          <Icon size={12}>
            <path d="M1 1v10l8-5z" fill="currentColor" stroke="none" />
          </Icon>
        </button>
        <button aria-label="最后一帧">
          <Icon size={12}>
            <path d="M0 1v10l8-5z" fill="currentColor" stroke="none" />
            <path d="M10.500 1v10" strokeWidth="2" />
          </Icon>
        </button>
      </section>
      <section className="flex-1 bg-[#1e1e1e] pr-[9px] text-xs text-[#a8a8a8]">
        <div className="flex h-12 items-start justify-end border-b border-black pt-2 pr-[10px]">
          <Burger />
        </div>
        <div className="h-[26px] border-b-2 border-black" />
        <div className="h-[26px] border-b-2 border-black" />
        <button className="block h-[26px] w-full border-b-2 border-black pt-[2px] pl-[11px] text-left">效果和预设</button>
      </section>
    </aside>
  );
}

export default function App() {
  const [showTip, setShowTip] = useState(true);

  return (
    <div className="flex h-screen flex-col overflow-hidden border-t border-r border-b border-l border-t-[#4f5f86] border-r-[#3a2a24] border-b-[#24507a] border-l-[#46557c] bg-black font-['Noto_Sans_CJK_SC',sans-serif]">
      <TitleBar />
      <Toolbar showTip={showTip} onClose={() => setShowTip(false)} />
      <main className="flex min-h-0 flex-1 gap-1 pr-px pb-px pl-px">
        <div className="flex min-w-0 flex-1 flex-col gap-1">
          <div className="flex min-h-0 flex-1 gap-1">
            <ProjectPanel />
            <CompositionPanel />
          </div>
          <TimelinePanel />
        </div>
        <SidePanels />
      </main>
    </div>
  );
}
